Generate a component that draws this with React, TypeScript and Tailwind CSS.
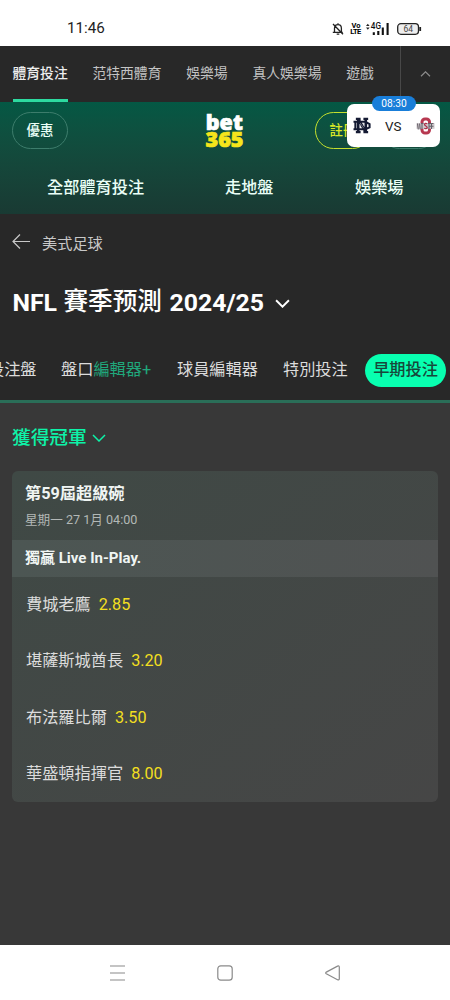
import { useState } from "react";

const productTabs = ["體育投注", "范特西體育", "娛樂場", "真人娛樂場", "遊戲"];

const selections = [
  { name: "費城老鷹", odds: "2.85" },
  { name: "堪薩斯城酋長", odds: "3.20" },
  { name: "布法羅比爾", odds: "3.50" },
  { name: "華盛頓指揮官", odds: "8.00" },
];

function Chevron({ className, up = false, strokeWidth = 1.5 }: { className: string; up?: boolean; strokeWidth?: number }) {
  return (
    <svg className={className} viewBox="0 0 14 8" fill="none" stroke="currentColor" strokeWidth={strokeWidth}>
      <path d={up ? "M1 7l6-6 6 6" : "M1 1l6 6 6-6"} />
    </svg>
  );
}

function StatusBar() {
  return (
    <div className="flex h-[46px] shrink-0 items-center bg-white pl-[67px] pt-3 text-black">
      <span className="w-[265px] text-[15.2px] leading-none text-[#222]">11:46</span>
      {/* Muted bell */}
      <svg className="h-3 w-3" viewBox="0 0 12 12" fill="none" stroke="#222" strokeWidth="1.3">
        <path d="M.8 9.300h10M2.500 9V5.400C2.500 3 4 1.600 6 1.600S9.400 3 9.400 5.400V9M6 .3v1.300M4.700 11.200h2.600M1 1l10 10.300" />
      </svg>
      <div className="ml-[7px] w-[10px] text-center text-[7.5px] font-bold leading-[6px]">
        <div>Vo</div>
        <div className="-ml-px tracking-[-0.6px]">LTE</div>
      </div>
      {/* Signal */}
      <svg className="ml-[5px] h-[14px] w-[24px]" viewBox="0 0 24 14">
        <path d="M0 4l1.800-2.200L3.600 4zM0 5.600h3.600L1.800 7.800z" fill="#222" />
        <text x="4.800" y="7.200" fontFamily="Roboto" fontSize="8.200" fontWeight="500" fill="#111">4G</text>
        <path d="M7.800 10.200v2.800M12.300 9v4M16.800 5.500V13M21.600 1v12" stroke="#111" strokeWidth="2.100" />
      </svg>
      {/* Battery */}
      <svg className="ml-[7px] h-[12px] w-[25px]" viewBox="0 0 25 12">
        <rect x=".7" y=".7" width="20.800" height="10.600" rx="3.200" fill="#eee" stroke="#222" strokeWidth="1.300" />
        <path d="M23.200 4v4" stroke="#222" strokeWidth="1.800" />
        <text x="11.200" y="9" textAnchor="middle" fontFamily="Roboto" fontSize="8.500" fill="#444">64</text>
      </svg>
    </div>
  );
}

function ScoreBubble() {
  return (
    <div className="absolute left-[347px] top-[2px] flex h-[43px] w-[93px] items-center rounded-[7px] bg-white">
      <svg className="ml-[6px] h-[17px] w-[18px]" viewBox="0 0 19 18" fill="none">
        <path d="M5.500 1.500v15M13.500 1.500v15M5.500 2l8 14" stroke="#141a33" strokeWidth="2.800" />
        <path d="M3 2h5M3 16h5M11 2h5M11 16h5" stroke="#141a33" strokeWidth="2.200" />
        <path d="M.5 5h12.500l4.500 2.500v3.500L13 13H.5M2.500 5v8" stroke="#141a33" strokeWidth="2.200" />
        <path d="M7.200 7.500v3.500M7.500 6.300l3.800 5.500M11.700 6.500v3" stroke="#9a9ba5" strokeWidth=".7" />
      </svg>
      <span className="ml-[14px] w-[18px] pt-[2px] text-[13.4px] leading-none text-[#222]">VS</span>
      <svg className="ml-[13px] h-[18px] w-[19px]" viewBox="0 0 19 18" fill="none">
        <rect x="6" y="2" width="7.500" height="14" rx="3" stroke="#b73850" strokeWidth="3" />
        <path d="M.5 6.200h18v5.600H.5z" fill="#cfc9cc" />
        <path d="M1.500 6.500l.8 6M3.600 6.500l.6 6M6 6.500V12M5 6.500h2.500M13 6.500V12M12 6.500h5.500M15.500 6.500V12M13.500 9.200h4" stroke="#66616a" strokeWidth="1.100" />
        <path d="M11.300 6.800c-1.300-.8-2.800-.4-2.800.8 0 1.500 2.700 1.300 2.700 2.900 0 1.400-1.700 1.500-2.900.7" stroke="#ad3049" strokeWidth="1.300" />
      </svg>
      <div className="absolute left-[25px] -top-[8px] flex h-[15px] w-[44px] items-center justify-center rounded-full bg-[#197ed9] text-[10.2px] text-white">
        08:30
      </div>
    </div>
  );
}

export default function App() {
  const [activeTab, setActiveTab] = useState(productTabs[0]);

  return (
    <div className="flex h-[1000px] w-[450px] flex-col overflow-hidden bg-[#383838] font-['Roboto','Noto_Sans_CJK_TC',sans-serif] text-[#dcdcdc]">
      <StatusBar />

      {/* Product tabs */}
      <div className="flex h-[56px] shrink-0 bg-[#282828]">
        <div className="flex w-[401px] gap-[24.8px] border-r border-[#484848] pl-[12.5px]">
          {productTabs.map((tab) => (
            <button
              key={tab}
              onClick={() => setActiveTab(tab)}
              className={`h-full shrink-0 border-b-[3px] pt-[2px] text-[13.8px] ${
                tab === activeTab ? "border-[#2ddaa0] font-medium text-[#eeeeee]" : "border-transparent text-[#c4c4c4]"
              }`}
            >
              {tab}
            </button>
          ))}
        </div>
        <div className="flex flex-1 items-center justify-center text-[#8d8d8d]">
          <Chevron className="h-[6px] w-[11px]" up />
        </div>
      </div>

      {/* Brand header */}
      <header className="relative h-[112px] shrink-0 bg-gradient-to-b from-[#045844] to-[#193a33]">
        <div className="flex items-start pl-3 pt-[10px]">
          <button className="h-[37px] w-[56px] rounded-full border border-[#3d7d6c] pt-px text-[13.4px] font-medium text-[#eafff7]">
            優惠
          </button>
          <svg className="ml-[137px] h-[37px] w-[40px] overflow-visible" viewBox="0 0 40 37" fontFamily="Open Sans" fontWeight="800">
            <text x=".8" y="17.800" fontSize="21.500" fill="#fff" stroke="#fff" strokeWidth=".7" textLength="37" lengthAdjust="spacingAndGlyphs">bet</text>
            <text x=".5" y="35.200" fontSize="20.500" fill="#f5e51b" stroke="#f5e51b" strokeWidth=".7" textLength="38" lengthAdjust="spacingAndGlyphs">365</text>
          </svg>
          <button className="ml-[70px] h-[37px] w-[56px] rounded-full border-[1.5px] border-[#c5e02e] pt-px text-[13.4px] font-medium text-[#d8e827]">
            註冊
          </button>
          <button className="ml-[10px] h-[37px] w-[56px] rounded-full border border-[#3d7d6c]" />
        </div>
        <nav className="flex pl-[47px] pt-[27px] text-[16.2px] font-medium leading-[24px] text-[#eafff7]">
          <span className="w-[178px]">全部體育投注</span>
          <span className="w-[130px]">走地盤</span>
          <span>娛樂場</span>
        </nav>
        <ScoreBubble />
      </header>

      {/* Competition header */}
      <div className="h-[189px] shrink-0 overflow-hidden border-b-[3px] border-[#2a6e58] bg-[#282828]">
        <div className="flex h-[58px] items-center pl-3 pt-[2px] text-[15.2px] text-[#c8c8c8]">
          <svg className="-mt-[5px] mr-3 h-[15px] w-[18px]" viewBox="0 0 18 15" fill="none" stroke="#c8c8c8" strokeWidth="1.200">
            <path d="M18 7.500H1M8 .5l-7 7 7 7" />
          </svg>
          美式足球
        </div>
        <div className="flex h-[60px] items-center whitespace-nowrap pl-[12.5px] pt-px text-[24.8px] font-bold text-white">
          <span className="w-[51px]">NFL</span>
          <span className="w-[106px] text-[24.6px] font-medium">賽季预測</span>
          <span className="w-[96px]">2024/25</span>
          <Chevron className="ml-[9px] mt-[2px] h-[9px] w-[15px]" strokeWidth={1.8} />
        </div>
        <div className="-ml-[12px] flex h-[76px] items-center whitespace-nowrap text-[16.2px]">
          <span className="w-[73px]">投注盤</span>
          <span className="w-[116px]">
            盤口<span className="text-[#20a87c]">編輯器+</span>
          </span>
          <span className="w-[106px]">球員編輯器</span>
          <span className="w-[82px]">特別投注</span>
          <span className="flex h-[33px] w-[81px] shrink-0 items-center justify-center rounded-full bg-[#08ffb0] font-medium text-[#17483a]">
            早期投注
          </span>
        </div>
      </div>

      {/* Market */}
      <main className="flex-1 px-[12px]">
        <div className="flex h-[68px] items-center pt-[2px] text-[18.7px] font-medium text-[#0df3a8]">
          獲得冠軍
          <Chevron className="ml-[5px] h-[8px] w-[14px]" />
        </div>
        <section className="h-[331px] overflow-hidden rounded-[6px] bg-gradient-to-br from-[#3f4945] to-[#464646]">
          <div className="h-[69px] pl-[13px] pt-[11px]">
            <h2 className="text-[16.2px] font-bold leading-[24px] text-[#f0f5f3]">第59屆超級碗</h2>
            <p className="mt-[4px] text-[12.6px] leading-[20px] text-[#b3b8b6]">星期一 27 1月 04:00</p>
          </div>
          <h3 className="flex h-[37px] items-center bg-gradient-to-r from-[#4c5653] to-[#505252] pl-[13px] text-[15px] font-bold text-[#f0f5f3]">
            獨贏 Live In-Play.
          </h3>
          {selections.map((s) => (
            <div key={s.name} className="flex h-[56.3px] items-center pl-[14px] text-[16.2px]">
              <span>{s.name}</span>
              <span className="ml-[8px] text-[#f2df20]">{s.odds}</span>
            </div>
          ))}
        </section>
      </main>

      {/* System navigation */}
      <div className="flex h-[55px] shrink-0 items-center bg-white pl-[110px]">
        <svg className="h-4 w-[15px]" viewBox="0 0 15 16" stroke="#8a8a8a" strokeWidth="1.200">
          <path d="M0 1h15M0 8h15M0 15h15" />
        </svg>
        <svg className="ml-[92px] h-4 w-4" viewBox="0 0 16 16" fill="none" stroke="#8a8a8a" strokeWidth="1.200">
          <rect x=".8" y=".8" width="14.400" height="14.400" rx="3" />
        </svg>
        <svg className="ml-[92px] h-4 w-[15px]" viewBox="0 0 15 16" fill="none" stroke="#8a8a8a" strokeWidth="1.200">
          <path d="M1.300 7.100L12.500 1.100Q14.300.5 14.300 2.200v11.500q0 1.600-1.800 1L1.300 8.800q-1.200-.8 0-1.700z" />
        </svg>
      </div>
    </div>
  );
}
